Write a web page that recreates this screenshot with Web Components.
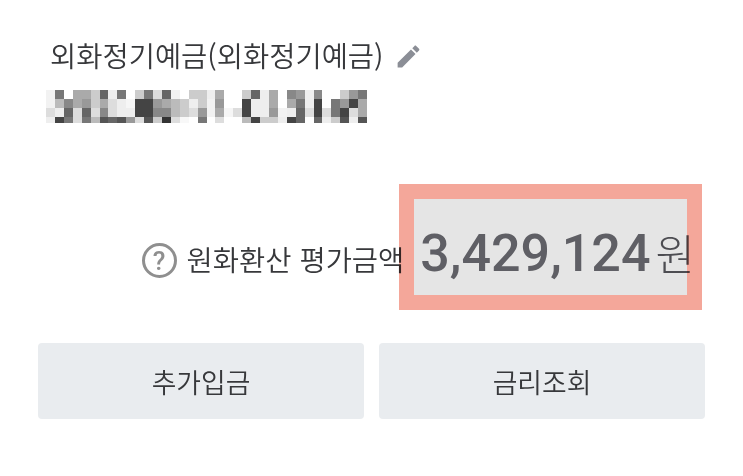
<!DOCTYPE html>
<html lang="ko"><head><meta charset="utf-8"><title>외화정기예금</title>
<style>html,body{margin:0;background:#fff}body{width:743px;height:476px;overflow:hidden;font-family:"Noto Sans CJK KR","Noto Sans",sans-serif;color:#3a3b3e}</style>
</head><body>
<account-card>
  <account-title slot="title">외화정기예금(외화정기예금)</account-title>
  <masked-number slot="number"></masked-number>
  <balance-row slot="balance" label="원화환산 평가금액" amount="3,429,124" unit="원"></balance-row>
  <action-button slot="actions">추가입금</action-button>
  <action-button slot="actions">금리조회</action-button>
</account-card>
<script>
class Base extends HTMLElement{
  render(html){ if(!this.shadowRoot) this.attachShadow({mode:'open'}); this.shadowRoot.innerHTML=html; }
}
customElements.define('account-card',class extends Base{
  connectedCallback(){this.render(`<style>
  :host{display:flex;flex-direction:column;width:743px;height:476px;box-sizing:border-box;padding:35px 38px 0 38px}
  .top{padding-left:12px;display:flex;flex-direction:column;gap:13px}
  .balance{margin-top:98px;}
  .actions{margin-top:58px;display:grid;grid-template-columns:326px 326px;gap:15px}
  </style>
  <div class="top"><slot name="title"></slot><slot name="number"></slot></div>
  <div class="balance"><slot name="balance"></slot></div>
  <div class="actions"><slot name="actions"></slot></div>`);}
});
customElements.define('account-title',class extends Base{
  connectedCallback(){this.render(`<style>
  :host{display:flex;align-items:center;gap:10px;font-size:28.5px;line-height:42px;font-weight:350;letter-spacing:0;color:#37383b}
  span{position:relative;top:-1px}
  svg{width:29px;height:29px;display:block;flex:none}
  </style><span><slot></slot></span>
  <svg viewBox="0 0 24 24" fill="#8b8e96"><path d="M3 17.25V21h3.75L17.81 9.94l-3.75-3.75L3 17.25zM20.71 7.04c.39-.39.39-1.02 0-1.41l-2.34-2.34c-.39-.39-1.02-.39-1.41 0l-1.83 1.83 3.75 3.75 1.83-1.83z"/></svg>`);}
});
customElements.define('masked-number',class extends Base{
  connectedCallback(){
    const rows=[
     'f2 777 fff aaa aaa ccc 666 eee 777 fff ccc 777 ddd 666 f2 fff ccc ccc eee aaa fff fff ccc 666 eee aaa fff 888 999 eee 888 fff fff ccc 999 777',
     'f2 bbb 888 aaa 999 ccc aaa ddd eee f6 444 444 999 aaa bbb ccc eee ccc f2 999 fff fff 444 eee eee aaa fff aaa 777 eee 444 fff 777 999 444 aaa',
     'ddd eee 666 ddd 666 ddd 888 ddd eee eee 444 444 888 888 bbb ccc ddd 999 f2 aaa f6 ddd 444 eee eee 999 f2 eee 666 ddd 444 ddd 777 444 ddd aaa',
     'eee 444 777 ddd 777 bbb 555 666 555 999 ddd 555 ccc 333 ddd f8 fff 777 fff ddd fff fff bbb 444 ccc ccc eee 444 666 fff 666 eee ccc 555 eee 555'
    ];
    const cells=rows.flatMap(r=>r.split(' ').map(c=>{const h=c.length==2?c+c+c:c;return `<i style="background:#${h}"></i>`})).join('');
    this.render(`<style>
    :host{display:block;width:321px;margin-left:-4px}
    .g{display:grid;grid-template-columns:repeat(36,1fr);grid-template-rows:9px 9px 9px 6px;filter:blur(.7px)}
    i{display:block}
    </style><div class="g" role="img" aria-label="가려진 계좌번호">${cells}</div>`);
  }
});
customElements.define('balance-row',class extends Base{
  connectedCallback(){
    const a=k=>this.getAttribute(k);
    this.render(`<style>
    :host{display:flex;align-items:center;justify-content:flex-end;padding-right:10px;height:64px}
    .q{width:29px;height:29px;border:3px solid #8f8f8f;border-radius:50%;display:flex;align-items:center;justify-content:center;font:500 26px/1 Roboto,sans-serif;color:#8f8f8f;flex:none;margin:15px 10px 0 0}
    .label{font-size:28.5px;font-weight:350;white-space:nowrap;color:#37383b;margin:11px 16px 0 0}
    .amt{position:relative;display:flex;align-items:baseline;white-space:nowrap;color:#6a6a70}
    .num{font:500 52px/64px Roboto,sans-serif}
    .unit{font-size:43px;font-weight:300;margin-left:5px;line-height:64px;color:#55555b}
    .frame{position:absolute;left:-21px;top:-36px;width:303px;height:126px;box-sizing:border-box;border:15px solid #f4a79a;background:#e5e5e5;mix-blend-mode:multiply}
    </style><span class="q">?</span><span class="label">${a('label')}</span>
    <span class="amt"><span class="num">${a('amount')}</span><span class="unit">${a('unit')}</span><span class="frame"></span></span>`);
  }
});
customElements.define('action-button',class extends Base{
  connectedCallback(){this.render(`<style>
  :host{display:flex;align-items:center;justify-content:center;height:76px;background:#e9ecef;border-radius:4px;font-size:26.8px;font-weight:350;color:#37383b}
  </style><slot></slot>`);}
});
</script>
</body></html>
